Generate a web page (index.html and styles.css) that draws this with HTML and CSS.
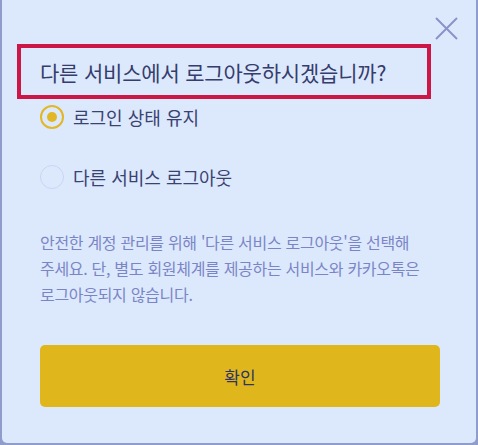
FILE: index.html
```html
<!DOCTYPE html>
<html lang="ko">
<head>
<meta charset="utf-8">
<link rel="stylesheet" href="styles.css">
</head>
<body>
<div class="modal">
  <button class="close" aria-label="닫기">
    <svg width="23" height="23" viewBox="0 0 23 23"><path d="M1 1L22 22M22 1L1 22" stroke="#8a93c9" stroke-width="2" fill="none"/></svg>
  </button>
  <h2 class="title">다른 서비스에서 로그아웃하시겠습니까?</h2>
  <div class="options">
    <label class="option">
      <span class="radio checked"><span class="dot"></span></span>
      <span class="label">로그인 상태 유지</span>
    </label>
    <label class="option">
      <span class="radio"></span>
      <span class="label">다른 서비스 로그아웃</span>
    </label>
  </div>
  <p class="desc">안전한 계정 관리를 위해 '다른 서비스 로그아웃'을 선택해<br>주세요. 단, 별도 회원체계를 제공하는 서비스와 카카오톡은<br>로그아웃되지 않습니다.</p>
  <button class="confirm">확인</button>
</div>
</body>
</html>
```
FILE: styles.css
```css
html, body {
  margin: 0;
  padding: 0;
  background: #8f9ccc;
  font-family: "Noto Sans CJK KR", "Noto Sans", sans-serif;
}
.modal {
  position: relative;
  margin: 0 2px;
  height: 443px;
  box-sizing: border-box;
  background: #dce9fc;
  border-radius: 0 0 5px 5px;
  padding: 44px 36px 0 38px;
  display: flex;
  flex-direction: column;
}
.close {
  position: absolute;
  top: 17px;
  left: 433px;
  width: 23px;
  height: 23px;
  padding: 0;
  border: 0;
  background: none;
  display: flex;
}
.title {
  margin: 0 0 0 -23px;
  width: 414px;
  box-sizing: border-box;
  height: 55px;
  border: 4px solid #cc1746;
  padding-left: 19px;
  display: flex;
  align-items: center;
  font-size: 21px;
  font-weight: 400;
  color: #363c6c;
  letter-spacing: -0.2px;
}
.options {
  display: flex;
  flex-direction: column;
  gap: 24px;
}
.option {
  height: 36px;
  display: flex;
  align-items: center;
  gap: 9px;
}
.radio {
  width: 24px;
  height: 24px;
  box-sizing: border-box;
  border-radius: 50%;
  border: 1.5px solid #cbd4f5;
  display: flex;
  align-items: center;
  justify-content: center;
}
.radio.checked {
  border: 2px solid #e2b726;
}
.dot {
  width: 10px;
  height: 10px;
  border-radius: 50%;
  background: #e2b726;
}
.label {
  font-size: 18px;
  color: #3b4272;
}
.desc {
  margin: 34px 0 0;
  font-size: 16px;
  line-height: 26px;
  color: #7b85c6;
  letter-spacing: -0.3px;
}
.confirm {
  margin-top: 38px;
  width: 400px;
  height: 62px;
  border: 0;
  border-radius: 5px;
  background: #dfb71d;
  font-family: inherit;
  font-size: 17px;
  color: #2f3462;
}
```
